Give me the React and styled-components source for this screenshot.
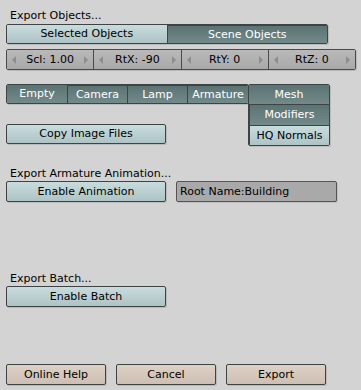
import React from "react";
import styled, { createGlobalStyle, css } from "styled-components";

const Global = createGlobalStyle`
  html, body {
    margin: 0;
    padding: 0;
    background: #d3d3d3;
  }
  body {
    font-family: "DejaVu Sans", "Liberation Sans", sans-serif;
    font-size: 11px;
    color: #000;
  }
`

const Page = styled.div`
  width: 361px;
  height: 390px;
  box-sizing: border-box;
  padding: 9px 0 5px 6px;
  display: flex;
  flex-direction: column;
  background: #d3d3d3;
`

const Label = styled.div`
  height: 13px;
  line-height: 13px;
  padding-left: 4px;
  margin-top: ${(p) => p.$top || 0}px;
`

const tones = {
  light: css`
    background: linear-gradient(#c9dcdd, #aec3c5);
    color: #000;
  `,
  dark: css`
    background: linear-gradient(#5c7373, #728a8a);
    color: #fff;
  `,
  beige: css`
    background: linear-gradient(#ddd0c5, #cdbfb3);
    color: #000;
  `,
}

const Group = styled.div`
  display: flex;
  flex-direction: ${(p) => (p.$vertical ? "column" : "row")};
  width: ${(p) => p.$w}px;
  margin-top: ${(p) => p.$top || 0}px;
  border: 1px solid #3e4444;
  border-radius: 2px;
  box-shadow: 1px 1px 0 rgba(0, 0, 0, 0.12);
  overflow: hidden;
`

const Seg = styled.div`
  ${(p) => tones[p.$tone]};
  flex: ${(p) => (p.$w ? `0 0 ${p.$w}px` : "1")};
  box-sizing: border-box;
  height: ${(p) => p.$h || 18}px;
  line-height: ${(p) => p.$h || 18}px;
  text-align: center;
  white-space: nowrap;
  & + & {
    ${(p) => (p.$col ? "border-top" : "border-left")}: 1px solid #3e4444;
  }
`

const Button = styled.div`
  ${(p) => tones[p.$tone || "light"]};
  box-sizing: border-box;
  width: ${(p) => p.$w || 160}px;
  height: ${(p) => p.$h || 21}px;
  line-height: ${(p) => (p.$h || 21) - 2}px;
  margin-top: ${(p) => p.$top || 0}px;
  border: 1px solid #3e4444;
  border-radius: 2px;
  box-shadow: 1px 1px 0 rgba(0, 0, 0, 0.12);
  text-align: center;
  white-space: nowrap;
`

const NumRow = styled.div`
  display: flex;
  width: 350px;
  height: 21px;
  box-sizing: border-box;
  margin-top: ${(p) => p.$top || 0}px;
  border: 1px solid #4a4a4a;
  border-radius: 2px;
  box-shadow: 1px 1px 0 rgba(0, 0, 0, 0.12);
  overflow: hidden;
`

const NumField = styled.div`
  flex: 1;
  position: relative;
  display: flex;
  align-items: center;
  justify-content: center;
  background: linear-gradient(#b9b9b9, #a9a9a9);
  & + & {
    border-left: 1px solid #4a4a4a;
  }
`

const Arrow = styled.span`
  position: absolute;
  top: 6px;
  ${(p) => (p.$right ? "right: 5px;" : "left: 5px;")}
  width: 0;
  height: 0;
  border-top: 4px solid transparent;
  border-bottom: 4px solid transparent;
  ${(p) =>
    p.$right
      ? "border-left: 4px solid #8c8c8c;"
      : "border-right: 4px solid #8c8c8c;"}
`

const Row = styled.div`
  display: flex;
  align-items: flex-start;
  gap: ${(p) => p.$gap || 0}px;
  margin-top: ${(p) => p.$top || 0}px;
`

const Column = styled.div`
  display: flex;
  flex-direction: column;
`

const TextField = styled.div`
  box-sizing: border-box;
  width: 161px;
  height: 21px;
  line-height: 19px;
  padding-left: 3px;
  background: #a9a9a9;
  border: 1px solid #555;
  border-radius: 2px;
  box-shadow: 1px 1px 0 rgba(0, 0, 0, 0.1);
`

const Footer = styled.div`
  display: flex;
  gap: 10px;
  margin-top: auto;
`

const Num = ({ children }) => (
  <NumField>
    <Arrow />
    {children}
    <Arrow $right />
  </NumField>
)

export default () => {
  return (
    <Page>
      <Global />
      <Label>Export Objects...</Label>
      <Group $w={320} $top={2}>
        <Seg $tone="light" $h={18}>Selected Objects</Seg>
        <Seg $tone="dark" $h={18}>Scene Objects</Seg>
      </Group>
      <NumRow $top={5}>
        <Num>Scl: 1.00</Num>
        <Num>RtX: -90</Num>
        <Num>RtY: 0</Num>
        <Num>RtZ: 0</Num>
      </NumRow>
      <Row $top={14}>
        <Column>
          <Group $w={241}>
            <Seg $tone="dark" $w={60}>Empty</Seg>
            <Seg $tone="dark" $w={60}>Camera</Seg>
            <Seg $tone="dark" $w={60}>Lamp</Seg>
            <Seg $tone="dark">Armature</Seg>
          </Group>
          <Button $top={20} $h={20}>Copy Image Files</Button>
        </Column>
        <Group $w={80} $vertical style={{ marginLeft: -1 }}>
          <Seg $tone="dark" $col $h={19}>Mesh</Seg>
          <Seg $tone="dark" $col $h={20}>Modifiers</Seg>
          <Seg $tone="light" $col $h={19}>HQ Normals</Seg>
        </Group>
      </Row>
      <Label $top={21}>Export Armature Animation...</Label>
      <Row $top={1} $gap={10}>
        <Button>Enable Animation</Button>
        <TextField>Root Name:Building</TextField>
      </Row>
      <Label $top={70}>Export Batch...</Label>
      <Button $top={1}>Enable Batch</Button>
      <Footer>
        <Button $tone="beige" $w={100}>Online Help</Button>
        <Button $tone="beige" $w={100}>Cancel</Button>
        <Button $tone="beige" $w={100}>Export</Button>
      </Footer>
    </Page>
  );
}
